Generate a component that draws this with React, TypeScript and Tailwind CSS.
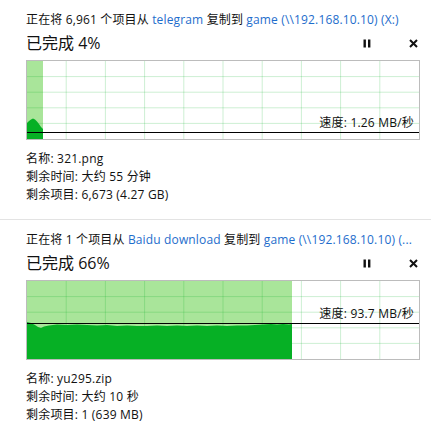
import React from 'react';

type Job = {
  count: string;
  from: string;
  to: string;
  percent: number;
  speed: string;
  name: string;
  timeLeft: string;
  itemsLeft: string;
  // width of the copied part, speed-line height and area outline, in graph units (392 x 78)
  doneW: number;
  lineY: number;
  area: string;
  last?: boolean;
};

const W = 392;
const H = 78;

const jobs: Job[] = [
  {
    count: '6,961',
    from: 'telegram',
    to: 'game (\\\\192.168.10.10) (X:)',
    percent: 4,
    speed: '1.26 MB/秒',
    name: '321.png',
    timeLeft: '大约 55 分钟',
    itemsLeft: '6,673 (4.27 GB)',
    doneW: 16,
    lineY: 71.5,
    area: '0,62 2,60 4,58.5 6,57.5 8,58.5 10,60.5 12,63 14,66 16,68 16,78 0,78',
  },
  {
    count: '1',
    from: 'Baidu download',
    to: 'game (\\\\192.168.10.10) (...',
    percent: 66,
    speed: '93.7 MB/秒',
    name: 'yu295.zip',
    timeLeft: '大约 10 秒',
    itemsLeft: '1 (639 MB)',
    doneW: 265,
    lineY: 42.5,
    area:
      '0,41 4,42 8,44 11,46 14,47 17,45.5 22,44.5 30,43.5 40,44 50,43.5 60,44 70,44.5 80,44 90,45 100,44.5 110,45 120,45 130,44.5 140,45 150,44.5 160,45 170,44.5 180,45 190,44.5 200,45 210,44.5 220,44.5 228,44 236,43.5 244,43 250,43.5 256,43 262,43.5 265,43 265,78 0,78',
    last: true,
  },
];

function PauseIcon() {
  return (
    <svg width="8" height="9" viewBox="0 0 8 9">
      <rect x="0.5" y="0.5" width="2.4" height="8" fill="#111" />
      <rect x="5" y="0.5" width="2.4" height="8" fill="#111" />
    </svg>
  );
}

function CloseIcon() {
  return (
    <svg width="9" height="9" viewBox="0 0 9 9">
      <path d="M1 1 L8 8 M8 1 L1 8" stroke="#111" strokeWidth="2" />
    </svg>
  );
}

function Graph({ job }: { job: Job }) {
  const cols = Array.from({ length: 9 }, (_, i) => (i + 1) * (W / 10));
  const rows = Array.from({ length: 4 }, (_, i) => (i + 1) * (H / 5));
  return (
    <div className="relative w-[394px] h-[80px] border border-[#bcbcbc] bg-white">
      <svg width={W} height={H} viewBox={`0 0 ${W} ${H}`} className="block">
        <rect x="0" y="0" width={job.doneW} height={H} fill="#a9e59a" />
        {cols.map((x) => (
          <line key={`c${x}`} x1={x} y1="0" x2={x} y2={H} stroke="#06b025" strokeOpacity="0.2" strokeWidth="1" />
        ))}
        {rows.map((y) => (
          <line key={`r${y}`} x1="0" y1={y} x2={W} y2={y} stroke="#06b025" strokeOpacity="0.2" strokeWidth="1" />
        ))}
        <polygon points={job.area} fill="#06b025" />
        <line x1="0" y1={job.lineY} x2={W} y2={job.lineY} stroke="#000" strokeWidth="1.2" />
      </svg>
      <div
        className="absolute right-[5px] text-[12px] leading-[16px] tracking-[0.2px] text-[#111]"
        style={{ top: job.lineY - 18 }}
      >
        速度: {job.speed}
      </div>
    </div>
  );
}

function JobPanel({ job }: { job: Job }) {
  return (
    <div className={job.last ? 'pt-[11px] pb-[10px]' : 'pt-[11px] pb-[15px] border-b border-[#e3e3e3]'}>
      <div className="pl-[26px] pr-[11px]">
        <div className="h-[18px] leading-[18px] text-[12px] tracking-[0.15px] text-[#111] whitespace-nowrap overflow-hidden">
          正在将 {job.count} 个项目从 <span className="text-[#1e6dcc]">{job.from}</span> 复制到{' '}
          <span className="text-[#1e6dcc]">{job.to}</span>
        </div>
        <div className="mt-[3px] h-[22px] flex items-center">
          <div className="flex-1 text-[16px] leading-[22px] text-[#111]">已完成 {job.percent}%</div>
          <div className="flex items-center gap-[38px] pr-[2px]">
            <PauseIcon />
            <CloseIcon />
          </div>
        </div>
        <div className="mt-[6px]">
          <Graph job={job} />
        </div>
        <div className="mt-[10px] text-[12px] leading-[18px] tracking-[0.2px] text-[#111]">
          <div>名称: {job.name}</div>
          <div>剩余时间: {job.timeLeft}</div>
          <div>剩余项目: {job.itemsLeft}</div>
        </div>
      </div>
    </div>
  );
}

export default function App() {
  return (
    <div
      className="w-[431px] h-[431px] bg-white overflow-hidden"
      style={{ fontFamily: '"Open Sans", "Noto Sans CJK SC", sans-serif' }}
    >
      {jobs.map((job) => (
        <JobPanel key={job.name} job={job} />
      ))}
    </div>
  );
}
